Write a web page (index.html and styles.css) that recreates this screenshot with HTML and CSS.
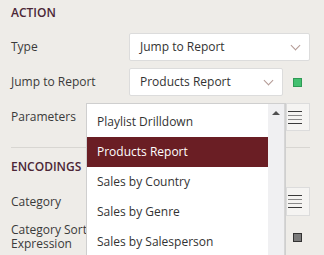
FILE: index.html
```html
<!DOCTYPE html>
<html>
<head>
    <meta charset="utf-8">
    <title>Action settings</title>
    <link rel="stylesheet" href="styles.css">
</head>
<body>
<div class="panel">
    <h3 class="section-title">ACTION</h3>
    <div class="field">
        <label class="field-label">Type</label>
        <div class="select">Jump to Report<span class="chevron"></span></div>
    </div>
    <div class="field">
        <label class="field-label">Jump to Report</label>
        <div class="select">Products Report<span class="chevron"></span></div>
        <span class="marker"><i class="swatch swatch-green"></i></span>
    </div>
    <div class="field">
        <label class="field-label">Parameters</label>
        <div class="select"></div>
        <span class="menu-btn"><i></i><i></i><i></i><i></i></span>
    </div>

    <hr class="divider">

    <h3 class="section-title">ENCODINGS</h3>
    <div class="field field-tall">
        <label class="field-label">Category</label>
        <div class="select"></div>
        <span class="menu-btn"><i></i><i></i><i></i><i></i></span>
    </div>
    <div class="field">
        <label class="field-label">Category Sort Expression</label>
        <div class="select"></div>
        <span class="marker"><i class="swatch swatch-gray"></i></span>
    </div>

    <!-- open dropdown of "Jump to Report" -->
    <div class="dropdown">
        <ul class="dropdown-list">
            <li>Playlist Drilldown</li>
            <li class="on">Products Report</li>
            <li>Sales by Country</li>
            <li>Sales by Genre</li>
            <li>Sales by Salesperson</li>
        </ul>
        <div class="scrollbar"><span class="arrow-up"></span></div>
    </div>
</div>
</body>
</html>
```

FILE: styles.css
```css
html, body {
    margin: 0;
    padding: 0;
    background: #eeece8;
}

body {
    font-family: "Open Sans", "DejaVu Sans", sans-serif;
    font-size: 12px;
    color: #333;
    overflow: hidden;
}

.panel {
    position: relative;
    padding: 7px 14px 0 11px;
    height: 248px;
}

.section-title {
    margin: 0 0 14px;
    font-size: 12px;
    font-weight: 600;
    line-height: 12px;
    color: #4b2636;
}

.field {
    display: flex;
    align-items: center;
    margin-bottom: 7px;
}

.field-label {
    width: 118px;
    flex: none;
    line-height: 14px;
    color: #3a3a3a;
}

.select {
    position: relative;
    flex: 1;
    height: 26px;
    line-height: 26px;
    padding: 0 10px;
    background: #fff;
    border: 1px solid #dcdcdc;
    border-radius: 2px;
    color: #333;
}

.chevron {
    position: absolute;
    right: 10px;
    top: 8px;
    width: 6px;
    height: 6px;
    border-right: 1px solid #b39a94;
    border-bottom: 1px solid #b39a94;
    transform: rotate(45deg);
}

.marker {
    width: 25px;
    flex: none;
    display: flex;
    justify-content: center;
    padding-left: 2px;
}

.swatch {
    display: block;
    width: 7px;
    height: 7px;
}

.swatch-green {
    background: #43c070;
    border: 1px solid #2f9a55;
}

.swatch-gray {
    background: #7a7a7a;
    border: 1px solid #333;
}

.menu-btn {
    width: 24px;
    height: 28px;
    flex: none;
    display: flex;
    flex-direction: column;
    justify-content: center;
    gap: 3px;
    padding-left: 1px;
    background: #f5f4f2;
    border: 1px solid #dcdcdc;
    box-sizing: border-box;
}

.menu-btn i {
    display: block;
    width: 14px;
    height: 1px;
    background: #3a3a3a;
}

.menu-btn i:nth-child(2),
.menu-btn i:nth-child(3) {
    background: #8a8a8a;
}

.field-tall {
    margin-top: 1px;
}

.field-tall .menu-btn {
    height: 29px;
}

.divider {
    border: 0;
    border-top: 1px solid #d8d6d2;
    margin: 16px 0 13px;
}

.dropdown {
    position: absolute;
    left: 86px;
    top: 103px;
    width: 198px;
    height: 160px;
    background: #fff;
    border: 1px solid #cfcfcf;
    border-bottom: 0;
    display: flex;
}

.dropdown-list {
    list-style: none;
    margin: 0;
    padding: 3px 0 0;
    flex: 1;
}

.dropdown-list li {
    height: 30px;
    line-height: 30px;
    padding-left: 10px;
    color: #333;
}

.dropdown-list li.on {
    background: #6a1e24;
    color: #fff;
}

.scrollbar {
    position: relative;
    width: 17px;
    background: #f0f0f2;
    border-right: 1px solid #d6d6d6;
    box-sizing: border-box;
}

.arrow-up {
    position: absolute;
    left: 4px;
    top: 7px;
    border-left: 4px solid transparent;
    border-right: 4px solid transparent;
    border-bottom: 4px solid #505050;
}
```
